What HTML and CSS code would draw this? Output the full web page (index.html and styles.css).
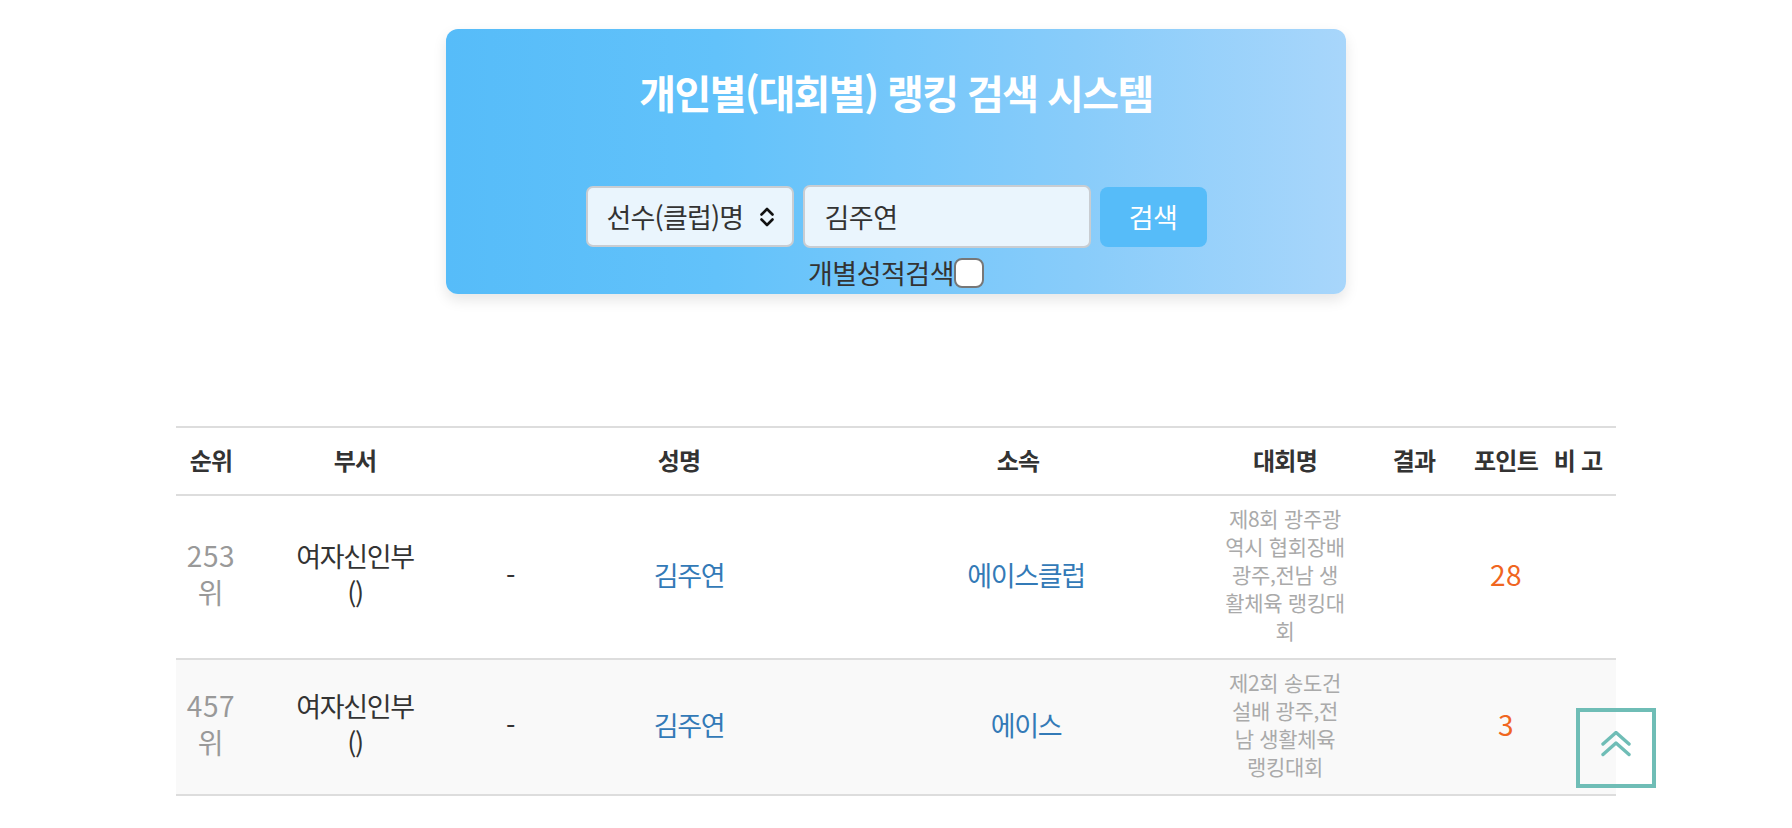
FILE: index.html
```html
<!DOCTYPE html>
<html lang="ko">
<head>
<meta charset="utf-8">
<title>개인별(대회별) 랭킹 검색 시스템</title>
<link rel="stylesheet" href="styles.css">
</head>
<body>
<div class="page">
  <section class="search-card">
    <h2 class="search-title">개인별(대회별) 랭킹 검색 시스템</h2>
    <form class="search-form">
      <div class="select-wrap">
        <select class="search-select">
          <option>선수(클럽)명</option>
        </select>
        <svg class="select-arrow" width="16" height="22" viewBox="0 0 16 22"><path d="M2.5 8.5 L8 3 L13.5 8.5 M2.5 13.5 L8 19 L13.5 13.5" fill="none" stroke="#111" stroke-width="2.6" stroke-linecap="round" stroke-linejoin="round"/></svg>
      </div>
      <input class="search-input" type="text" value="김주연">
      <button class="search-btn" type="button">검색</button>
    </form>
    <label class="check-row">개별성적검색<input class="check-box" type="checkbox"></label>
  </section>

  <table class="rank-table">
    <colgroup>
      <col style="width:70px"><col style="width:218px"><col style="width:92px"><col style="width:266px"><col style="width:392px"><col style="width:142px"><col style="width:116px"><col style="width:68px"><col style="width:76px">
    </colgroup>
    <thead>
      <tr>
        <th>순위</th><th>부서</th><th></th><th class="th-name">성명</th><th>소속</th><th>대회명</th><th>결과</th><th>포인트</th><th>비 고</th>
      </tr>
    </thead>
    <tbody>
      <tr>
        <td class="rank">253<br>위</td>
        <td class="div">여자신인부<br>()</td>
        <td class="dash">-</td>
        <td class="name"><a href="#">김주연</a></td>
        <td class="club"><a href="#">에이스클럽</a></td>
        <td class="event"><div class="event-text">제8회 광주광역시 협회장배 광주,전남 생활체육 랭킹대회</div></td>
        <td></td>
        <td class="point">28</td>
        <td></td>
      </tr>
      <tr class="alt">
        <td class="rank">457<br>위</td>
        <td class="div">여자신인부<br>()</td>
        <td class="dash">-</td>
        <td class="name"><a href="#">김주연</a></td>
        <td class="club"><a href="#">에이스</a></td>
        <td class="event"><div class="event-text">제2회 송도건설배 광주,전남 생활체육 랭킹대회</div></td>
        <td></td>
        <td class="point">3</td>
        <td></td>
      </tr>
    </tbody>
  </table>
</div>

<a class="to-top" href="#">
  <svg width="30" height="28" viewBox="0 0 30 28"><path d="M2 13 L15 1.5 L28 13 M2 23.5 L15 12 L28 23.5" fill="none" stroke="#6fbdb6" stroke-width="3.4" stroke-linecap="round" stroke-linejoin="round"/></svg>
</a>
</body>
</html>
```

FILE: styles.css
```css
* { box-sizing: border-box; }

html, body {
  margin: 0;
  padding: 0;
  background: #ffffff;
}

body {
  font-family: "Noto Sans CJK KR", "Noto Sans", sans-serif;
  color: #333;
}

.page {
  padding-top: 29px;
  display: flex;
  flex-direction: column;
  align-items: center;
}

.search-card {
  width: 900px;
  height: 265px;
  border-radius: 12px;
  background: linear-gradient(to right, #56bcf9 0%, #62c2fa 30%, #88ccfa 70%, #a8d6fb 100%);
  box-shadow: 0 6px 14px rgba(0, 0, 0, 0.10);
  display: flex;
  flex-direction: column;
  align-items: center;
  padding-top: 39px;
}

.search-title {
  margin: 0;
  color: #fff;
  font-size: 40px;
  font-weight: 700;
  letter-spacing: -1.6px;
  line-height: 48px;
}

.search-form {
  margin-top: 69px;
  display: flex;
  align-items: center;
  gap: 9px;
  height: 63px;
}

.select-wrap {
  position: relative;
  width: 208px;
  height: 61px;
}

.search-select {
  appearance: none;
  -webkit-appearance: none;
  width: 100%;
  height: 100%;
  border: 2px solid #c9cdd2;
  border-radius: 7px;
  background: #eaf5fd;
  padding: 0 0 0 19px;
  font-family: inherit;
  font-size: 27px;
  letter-spacing: -0.8px;
  color: #333;
}

.select-arrow {
  position: absolute;
  right: 19px;
  top: 20px;
  pointer-events: none;
}

.search-input {
  width: 288px;
  height: 63px;
  border: 2px solid #c9cdd2;
  border-radius: 7px;
  background: #eaf5fd;
  padding: 0 0 0 20px;
  font-family: inherit;
  font-size: 27px;
  letter-spacing: -0.5px;
  color: #333;
  outline: none;
}

.search-btn {
  width: 107px;
  height: 60px;
  border: none;
  border-radius: 8px;
  background: #56bcf9;
  color: #fff;
  font-family: inherit;
  font-size: 27px;
  letter-spacing: -0.5px;
  padding: 0;
}

.check-row {
  margin-top: 10px;
  display: flex;
  align-items: center;
  font-size: 27px;
  letter-spacing: -0.5px;
  line-height: 30px;
  color: #333;
}

.check-box {
  appearance: none;
  -webkit-appearance: none;
  margin: 0;
  width: 30px;
  height: 30px;
  border: 2.5px solid #777;
  border-radius: 8px;
  background: #fff;
}

.rank-table {
  margin-top: 132px;
  width: 1440px;
  table-layout: fixed;
  border-collapse: collapse;
  border-top: 2px solid #ddd;
}

.rank-table th {
  height: 68px;
  font-size: 24px;
  font-weight: 700;
  letter-spacing: -0.8px;
  color: #333;
  text-align: center;
  padding: 0 0 4px;
  border-bottom: 2px solid #ddd;
  vertical-align: middle;
}

.rank-table th.th-name {
  padding-right: 20px;
}

.rank-table td {
  font-size: 27px;
  letter-spacing: -1.3px;
  line-height: 37px;
  text-align: center;
  vertical-align: middle;
  padding: 8px 0 14px;
  border-bottom: 2px solid #ddd;
  color: #333;
}

.rank-table tr.alt td {
  background: #f9f9f9;
}

.rank-table td.rank {
  color: #999;
  font-size: 28px;
  letter-spacing: 0.6px;
}

.rank-table td a {
  color: #337ab7;
  text-decoration: none;
}

.rank-table td.club {
  padding-left: 16px;
}

.rank-table td.event {
  font-size: 21px;
  letter-spacing: -0.3px;
  line-height: 28px;
  color: #aaa;
}

.event-text {
  width: 124px;
  margin: 0 auto;
}

.rank-table td.point {
  color: #f0661f;
  font-size: 28px;
  letter-spacing: 0.5px;
}

.to-top {
  position: fixed;
  right: 136px;
  bottom: 40px;
  width: 80px;
  height: 80px;
  border: 4px solid #6fbdb6;
  display: flex;
  align-items: center;
  justify-content: center;
  padding-bottom: 6px;
}
```
